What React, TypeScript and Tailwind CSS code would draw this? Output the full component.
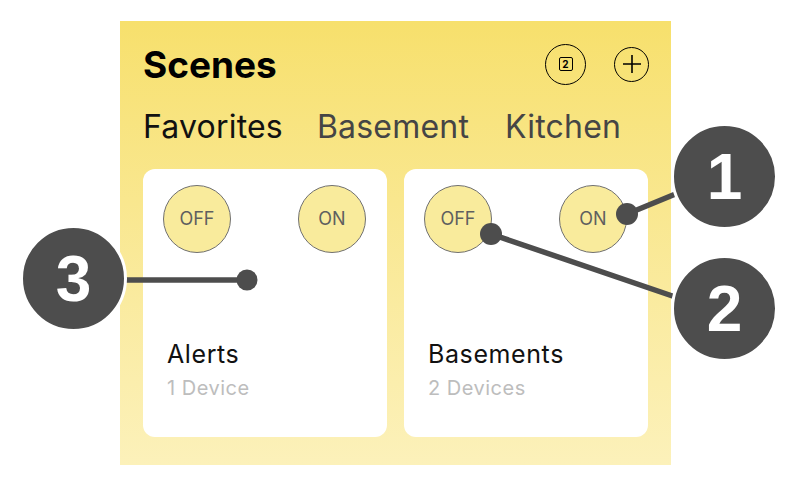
import React from "react";

function Toggle({ label }: { label: string }) {
  return (
    <div className="w-[68px] h-[68px] rounded-full border border-[#707070] bg-[#f9eb9c] flex items-center justify-center text-[18px] text-[#5f5f5f] leading-none">
      {label}
    </div>
  );
}

function Card({ title, sub }: { title: string; sub: string }) {
  return (
    <div className="h-[268px] rounded-[12px] bg-white pl-[20px] pr-[21px] pt-[16px] flex flex-col">
      <div className="flex justify-between">
        <Toggle label="OFF" />
        <Toggle label="ON" />
      </div>
      <div className="mt-[86px] ml-[4px] text-[25px] leading-[30px] tracking-[0.6px] text-[#111]">{title}</div>
      <div className="mt-[7px] ml-[4px] text-[20px] leading-[24px] tracking-[0.5px] text-[#bdbdbd]">{sub}</div>
    </div>
  );
}

function Badge({ n, cls }: { n: string; cls: string }) {
  return (
    <div
      className={
        "absolute w-[107px] h-[107px] rounded-full bg-[#4d4d4d] border-[3px] border-white flex items-center justify-center text-white text-[64px] font-bold leading-none " +
        cls
      }
      style={{ fontFamily: '"Liberation Sans", Arial, sans-serif' }}
    >
      {n}
    </div>
  );
}

export default function App() {
  return (
    <div
      className="relative w-[798px] h-[486px] bg-white overflow-hidden"
      style={{ fontFamily: 'Inter, "Noto Sans", sans-serif' }}
    >
      <div className="ml-[120px] pt-[21px]">
        <div className="w-[551px] h-[444px] bg-gradient-to-b from-[#f7e06c] to-[#fcf1ba] px-[23px] pt-[21px]">
          <div className="h-[44px] flex items-center justify-between">
            <div className="text-[37px] font-bold leading-none text-black">Scenes</div>
            <div className="flex items-center gap-[28px] mr-[-1px]">
              <div className="w-[41px] h-[41px] rounded-full border-[1.5px] border-black flex items-center justify-center">
                <div className="w-[14px] h-[14px] rounded-[2px] border-[1.5px] border-black flex items-center justify-center text-[10px] font-bold leading-none text-black">
                  2
                </div>
              </div>
              <div className="w-[35px] h-[35px] rounded-full border-[1.5px] border-black flex items-center justify-center">
                <svg width="20" height="20" viewBox="0 0 20 20">
                  <path d="M10 1V19M1 10H19" stroke="black" strokeWidth="1.6" />
                </svg>
              </div>
            </div>
          </div>
          <div className="mt-[26px] flex h-[30px] items-center text-[32px] leading-none tracking-[0.2px]">
            <span className="text-[#111]">Favorites</span>
            <span className="ml-[34px] text-[#454545]">Basement</span>
            <span className="ml-[36px] text-[#454545]">Kitchen</span>
          </div>
          <div className="mt-[27px] grid grid-cols-2 gap-[17px]">
            <Card title="Alerts" sub="1 Device" />
            <Card title="Basements" sub="2 Devices" />
          </div>
        </div>
      </div>

      <svg className="absolute left-0 top-0" width="798" height="486" viewBox="0 0 798 486">
        <g stroke="#4d4d4d" strokeWidth="5.5" strokeLinecap="round" fill="none">
          <line x1="100" y1="280" x2="247" y2="280" />
          <line x1="627" y1="214" x2="690" y2="188" />
          <line x1="491" y1="234" x2="690" y2="302" />
        </g>
        <g fill="#4d4d4d">
          <circle cx="247" cy="280" r="10.5" />
          <circle cx="627" cy="214" r="11" />
          <circle cx="491" cy="234" r="11" />
        </g>
      </svg>

      <Badge n="1" cls="left-[671px] top-[123px]" />
      <Badge n="2" cls="left-[671px] top-[255px]" />
      <Badge n="3" cls="left-[20px] top-[225px]" />
    </div>
  );
}
